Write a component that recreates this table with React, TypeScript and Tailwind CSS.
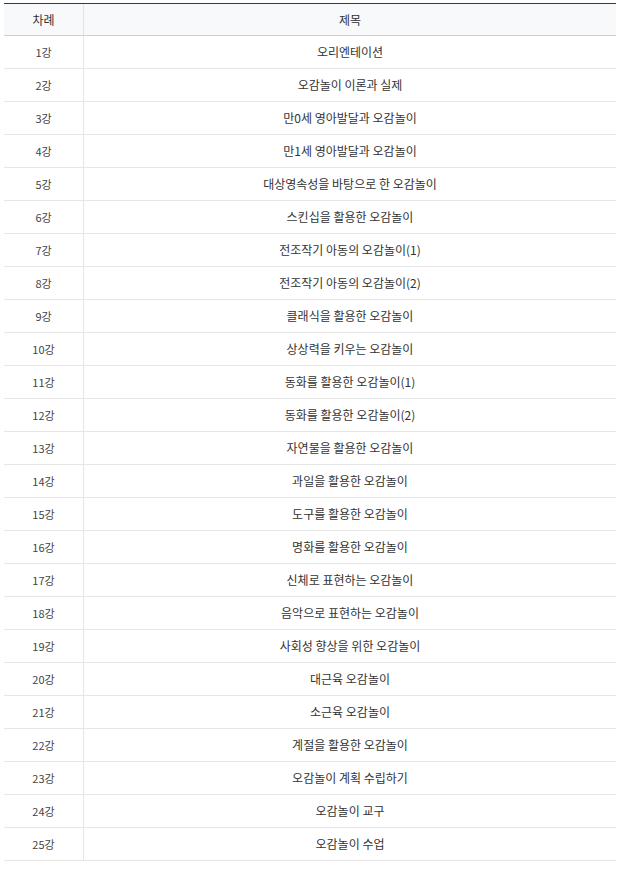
import React from "react";

const titles = [
  "오리엔테이션",
  "오감놀이 이론과 실제",
  "만0세 영아발달과 오감놀이",
  "만1세 영아발달과 오감놀이",
  "대상영속성을 바탕으로 한 오감놀이",
  "스킨십을 활용한 오감놀이",
  "전조작기 아동의 오감놀이(1)",
  "전조작기 아동의 오감놀이(2)",
  "클래식을 활용한 오감놀이",
  "상상력을 키우는 오감놀이",
  "동화를 활용한 오감놀이(1)",
  "동화를 활용한 오감놀이(2)",
  "자연물을 활용한 오감놀이",
  "과일을 활용한 오감놀이",
  "도구를 활용한 오감놀이",
  "명화를 활용한 오감놀이",
  "신체로 표현하는 오감놀이",
  "음악으로 표현하는 오감놀이",
  "사회성 향상을 위한 오감놀이",
  "대근육 오감놀이",
  "소근육 오감놀이",
  "계절을 활용한 오감놀이",
  "오감놀이 계획 수립하기",
  "오감놀이 교구",
  "오감놀이 수업",
];

export default function App() {
  return (
    <div
      className="bg-white min-h-[870px] pl-[4px] pt-[3px]"
      style={{ fontFamily: '"Noto Sans CJK KR", "Noto Sans", sans-serif' }}
    >
      <div className="w-[612px] border-t border-[#3a3a3a] text-[12px] text-[#333]">
        <div className="flex h-[32px] bg-[#f8f9fb] border-b border-[#cfcfcf]">
          <div className="w-[80px] flex items-center justify-center border-r border-[#e3e3e3]">
            차례
          </div>
          <div className="flex-1 flex items-center justify-center">제목</div>
        </div>
        {titles.map((t, i) => (
          <div key={i} className="flex h-[33px] border-b border-[#e6e6e6]">
            <div className="w-[80px] flex items-center justify-center border-r border-[#e6e6e6] text-[#444] text-[11px]">
              {i + 1}강
            </div>
            <div className="flex-1 flex items-center justify-center">{t}</div>
          </div>
        ))}
      </div>
    </div>
  );
}
